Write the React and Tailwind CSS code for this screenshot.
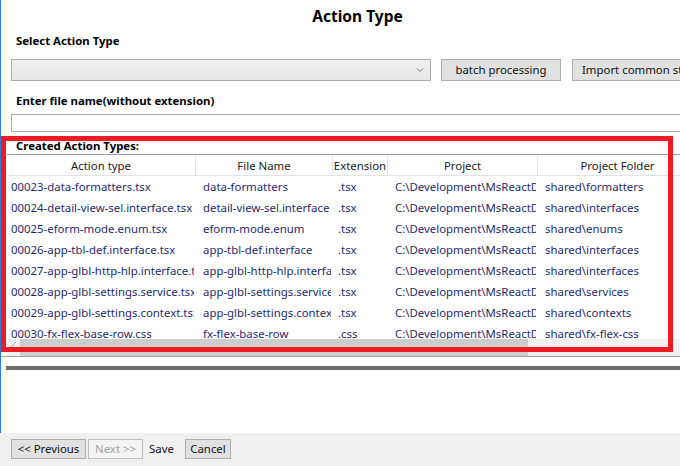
import React from "react";

const rows = [
  ["00023-data-formatters.tsx", "data-formatters", ".tsx", "C:\\Development\\MsReactD", "shared\\formatters"],
  ["00024-detail-view-sel.interface.tsx", "detail-view-sel.interface", ".tsx", "C:\\Development\\MsReactD", "shared\\interfaces"],
  ["00025-eform-mode.enum.tsx", "eform-mode.enum", ".tsx", "C:\\Development\\MsReactD", "shared\\enums"],
  ["00026-app-tbl-def.interface.tsx", "app-tbl-def.interface", ".tsx", "C:\\Development\\MsReactD", "shared\\interfaces"],
  ["00027-app-glbl-http-hlp.interface.tsx", "app-glbl-http-hlp.interface", ".tsx", "C:\\Development\\MsReactD", "shared\\interfaces"],
  ["00028-app-glbl-settings.service.tsx", "app-glbl-settings.service", ".tsx", "C:\\Development\\MsReactD", "shared\\services"],
  ["00029-app-glbl-settings.context.tsx", "app-glbl-settings.context", ".tsx", "C:\\Development\\MsReactD", "shared\\contexts"],
  ["00030-fx-flex-base-row.css", "fx-flex-base-row", ".css", "C:\\Development\\MsReactD", "shared\\fx-flex-css"],
];

const cols = [
  { w: "w-[189px]", label: "Action type", pad: "pl-[4px] pr-[2px]" },
  { w: "w-[137px]", label: "File Name", pad: "pl-[7px] pr-[2px]" },
  { w: "w-[55px]", label: "Extension", pad: "pl-[5px] pr-[2px]" },
  { w: "w-[150px]", label: "Project", pad: "pl-[7px] pr-[2px]" },
  { w: "w-[160px]", label: "Project Folder", pad: "pl-[7px] pr-[2px]" },
];

export default function App() {
  return (
    <div
      className="relative w-[680px] h-[466px] overflow-hidden bg-white text-[11.4px] text-[#111]"
      style={{ fontFamily: '"Noto Sans", "Open Sans", sans-serif' }}
    >
      <div className="h-[433px] border-l border-[#2a7ad6] flex flex-col">
        <div className="h-[34px] flex items-center justify-center pl-[34px] text-[15.5px] font-bold text-black">
          Action Type
        </div>
        <div className="h-[14px] flex items-center pl-[15px] font-bold text-black">Select Action Type</div>
        <div className="mt-[11px] h-[22px] flex items-stretch pl-[10px]">
          <div className="w-[420px] shrink-0 border border-[#acacac] bg-gradient-to-b from-[#f0f0f0] to-[#e5e5e5] flex items-center justify-end pr-[6px]">
            <svg width="8" height="6" viewBox="0 0 8 6">
              <path d="M1 1.5 L4 4.5 L7 1.5" stroke="#777" strokeWidth="1" fill="none" />
            </svg>
          </div>
          <div className="ml-[10px] w-[120px] shrink-0 border border-[#adadad] bg-[#e1e1e1] flex items-center justify-center">
            batch processing
          </div>
          <div className="ml-[11px] w-[140px] shrink-0 border border-[#adadad] bg-[#e1e1e1] flex items-center pl-[9px] whitespace-nowrap">
            Import common styles
          </div>
        </div>
        <div className="mt-[12px] h-[16px] flex items-center pl-[15px] font-bold text-black">
          Enter file name(without extension)
        </div>
        <div className="mt-[5px] ml-[10px] h-[18px] border border-[#abadb3] border-r-0 bg-white" />
        <div className="mt-[6px] h-[16px] flex items-center pl-[15px] font-bold text-black">Created Action Types:</div>
        <div className="ml-[6px] h-[1px] bg-[#a0a0a0]" />
        <div className="ml-[6px] mt-[1px] flex flex-col">
          <div className="flex h-[20px] border-b border-[#e3e3e3] bg-white">
            {cols.map((c, i) => (
              <div
                key={i}
                className={`${c.w} shrink-0 flex items-center justify-center border-r border-[#e3e3e3] text-[#1a1a1a] whitespace-nowrap overflow-hidden`}
              >
                {c.label}
              </div>
            ))}
          </div>
          <div className="h-[163px] overflow-hidden">
            {rows.map((r, ri) => (
              <div key={ri} className="flex h-[21px] items-center text-[#1f2a6e]">
                {r.map((cell, ci) => (
                  <div
                    key={ci}
                    className={`${cols[ci].w} ${cols[ci].pad} shrink-0 overflow-hidden`}
                  >
                    <div className="whitespace-nowrap overflow-hidden">{cell}</div>
                  </div>
                ))}
              </div>
            ))}
          </div>
          <div className="h-[17px] flex bg-[#f0f0f0]">
            <div className="w-[13px] flex items-start justify-center pt-[2px]">
              <svg width="7" height="7" viewBox="0 0 7 7">
                <path d="M1 6 L6 1" stroke="#aaa" strokeWidth="1" />
              </svg>
            </div>
            <div className="w-[508px] bg-[#cdcdcd]" />
          </div>
        </div>
        <div className="h-[1px] bg-[#a0a0a0]" />
        <div className="mt-[9px] ml-[5px] h-[4px] bg-[#6d6d6d]" />
      </div>
      <div className="h-[33px] bg-[#f0f0f0] flex items-center pl-[11px] pb-[1px]">
        <div className="h-[20px] w-[75px] border border-[#adadad] bg-[#e1e1e1] flex items-center justify-center">
          &lt;&lt; Previous
        </div>
        <div className="ml-[2px] h-[20px] w-[55px] border border-[#bfbfbf] bg-[#f4f4f4] flex items-center justify-center text-[#a0a0a0]">
          Next &gt;&gt;
        </div>
        <div className="ml-[6px] w-[34px]">Save</div>
        <div className="ml-[2px] h-[20px] w-[46px] border border-[#adadad] bg-[#e1e1e1] flex items-center justify-center">
          Cancel
        </div>
      </div>
      <div className="absolute left-[1px] top-[136px] w-[672px] h-[216px] border-[5px] border-[#ed1c24] pointer-events-none" />
    </div>
  );
}
